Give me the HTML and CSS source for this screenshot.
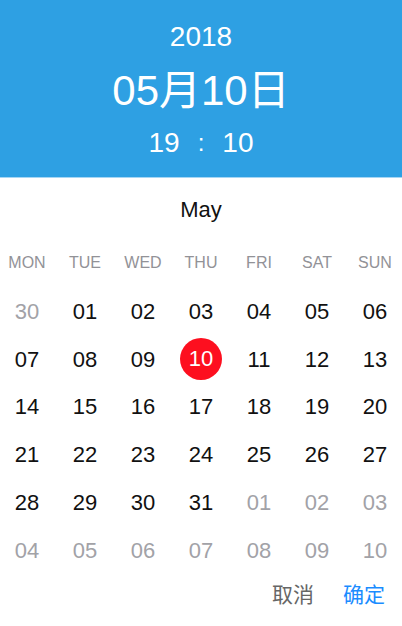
FILE: index.html
```html
<!DOCTYPE html>
<html lang="zh-CN">
<head>
<meta charset="utf-8">
<link rel="stylesheet" href="styles.css">
</head>
<body>
<div class="picker">
  <header class="head">
    <div class="year">2018</div>
    <div class="date">05月10日</div>
    <div class="time"><span>19</span><span class="colon">:</span><span>10</span></div>
  </header>
  <div class="month">May</div>
  <div class="grid weekdays">
    <div>MON</div><div>TUE</div><div>WED</div><div>THU</div><div>FRI</div><div>SAT</div><div>SUN</div>
  </div>
  <div class="grid days">
    <div class="muted">30</div><div>01</div><div>02</div><div>03</div><div>04</div><div>05</div><div>06</div>
    <div>07</div><div>08</div><div>09</div><div><span class="sel">10</span></div><div>11</div><div>12</div><div>13</div>
    <div>14</div><div>15</div><div>16</div><div>17</div><div>18</div><div>19</div><div>20</div>
    <div>21</div><div>22</div><div>23</div><div>24</div><div>25</div><div>26</div><div>27</div>
    <div>28</div><div>29</div><div>30</div><div>31</div><div class="muted">01</div><div class="muted">02</div><div class="muted">03</div>
    <div class="muted">04</div><div class="muted">05</div><div class="muted">06</div><div class="muted">07</div><div class="muted">08</div><div class="muted">09</div><div class="muted">10</div>
  </div>
  <div class="actions">
    <span class="cancel">取消</span>
    <span class="ok">确定</span>
  </div>
</div>
</body>
</html>
```

FILE: styles.css
```css
html, body {
  margin: 0;
  padding: 0;
  background: #fff;
}
body {
  width: 402px;
  height: 626px;
  overflow: hidden;
  font-family: "Liberation Sans", "Noto Sans CJK SC", sans-serif;
}
.picker {
  width: 402px;
  overflow: hidden;
}
.head {
  height: 178px;
  box-sizing: border-box;
  padding-top: 20px;
  background: #2ea0e3;
  border-bottom: 1px solid #a6d6f4;
  color: #fff;
  display: flex;
  flex-direction: column;
  align-items: center;
}
.year {
  font-size: 28px;
  line-height: 34px;
}
.date {
  margin-top: 9px;
  font-size: 42px;
  line-height: 55px;
}
.time {
  margin-top: 8px;
  font-size: 28px;
  line-height: 34px;
  display: flex;
  gap: 18px;
}
.colon {
  font-size: 24px;
}
.month {
  padding-top: 12px;
  text-align: center;
  font-size: 22px;
  line-height: 40px;
  color: #111;
}
.grid {
  display: grid;
  grid-template-columns: repeat(7, 1fr);
  margin: 0 -2px;
  text-align: center;
}
.weekdays {
  margin-top: 21px;
  font-size: 16px;
  line-height: 24px;
  color: #929297;
}
.days {
  margin-top: 13px;
  grid-auto-rows: 47.8px;
  font-size: 22px;
  color: #111;
}
.days > div {
  display: flex;
  align-items: center;
  justify-content: center;
}
.days .muted {
  color: #a2a2a7;
}
.sel {
  width: 42px;
  height: 42px;
  border-radius: 50%;
  background: #fd0f1f;
  color: #fff;
  display: flex;
  align-items: center;
  justify-content: center;
  margin-top: -2px;
}
.actions {
  display: flex;
  justify-content: flex-end;
  gap: 29px;
  padding-right: 17px;
  font-size: 21px;
  line-height: 40px;
}
.cancel {
  color: #666;
}
.ok {
  color: #1a8cff;
}
```
